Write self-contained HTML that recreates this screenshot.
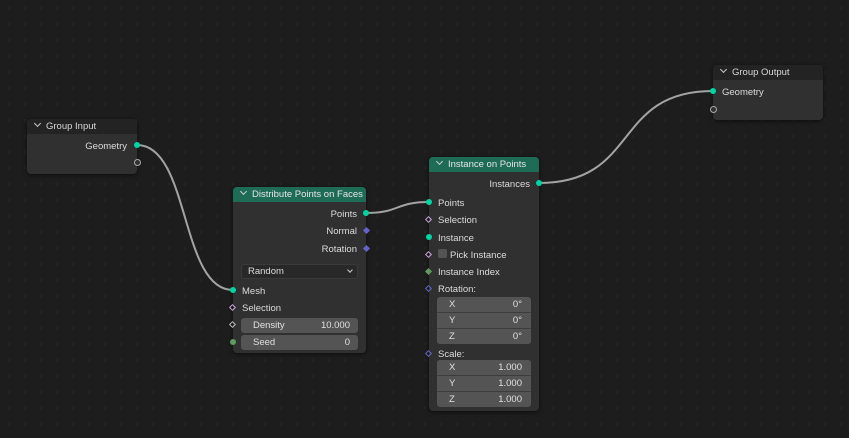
<!DOCTYPE html>
<html><head><meta charset="utf-8"><style>
body{margin:0;width:849px;height:438px;overflow:hidden;background:#1d1d1d;font-family:"Liberation Sans",sans-serif;font-size:9.5px;color:#dcdcdc;position:relative}
.grid{position:absolute;inset:0;background-image:radial-gradient(circle,#252525 1px,transparent 1.3px);background-size:16px 16px;background-position:1px 0px}
.n{position:absolute;background:#303030;border-radius:4px;box-shadow:0 1px 4px rgba(0,0,0,.6)}
.h{height:15px;line-height:16px;border-radius:4px 4px 0 0;background:#232323;padding-left:8px;color:#d8d8d8}
.h.g{background:#1e6b56;color:#e6e6e6}
.h::before{content:"";display:inline-block;width:4px;height:4px;border-right:1px solid #ccc;border-bottom:1px solid #ccc;transform:rotate(45deg);margin:0 6px 3px 0}
.t{position:absolute;white-space:nowrap;line-height:12px;margin-top:2px}
.r{text-align:right}
.s{position:absolute;width:6px;height:6px;border-radius:50%;background:#00d6a3;margin:-3px 0 0 -3px}
.d{position:absolute;width:5px;height:5px;transform:rotate(45deg);margin:-3px 0 0 -3px;box-sizing:border-box}
.f{position:absolute;background:#545454;border-radius:3px;height:15px;line-height:16px;box-sizing:border-box;padding:0 8px 0 12px;display:flex;justify-content:space-between;color:#e0e0e0}
.box{position:absolute;background:#545454;border-radius:3px;overflow:hidden}
.box div{height:15px;line-height:16px;display:flex;justify-content:space-between;padding:0 9px 0 12px;border-bottom:1px solid #3c3c3c;color:#e0e0e0}
</style></head><body>
<div class="grid"></div>
<svg width="849" height="438" style="position:absolute;left:0;top:0">
<g fill="none" stroke="#a3a3a3" stroke-width="2">
<path d="M137 145 C190 145 180 290 233 290"/>
<path d="M366 213 C400 213 395 202 429 202"/>
<path d="M539 183 C640 183 612 91 713 91"/>
</g></svg>

<div class="n" style="left:27px;top:119px;width:110px;height:55px">
<div class="h">Group Input</div>
<div class="t r" style="right:10px;top:20px">Geometry</div>
</div>
<div class="s" style="left:137px;top:145px"></div>
<div class="s" style="left:137px;top:162px;background:#303030;border:1px solid #aaa;width:5px;height:5px"></div>

<div class="n" style="left:713px;top:65px;width:110px;height:55px">
<div class="h">Group Output</div>
<div class="t" style="left:9px;top:20px">Geometry</div>
</div>
<div class="s" style="left:713px;top:91px"></div>
<div class="s" style="left:713px;top:109px;background:#303030;border:1px solid #aaa;width:5px;height:5px"></div>

<div class="n" style="left:233px;top:187px;width:133px;height:166px">
<div class="h g">Distribute Points on Faces</div>
<div class="t r" style="right:9px;top:20px">Points</div>
<div class="t r" style="right:9px;top:37px">Normal</div>
<div class="t r" style="right:9px;top:55px">Rotation</div>
<div style="position:absolute;left:8px;top:77px;width:117px;height:15px;background:#282828;border:1px solid #3a3a3a;border-radius:3px;box-sizing:border-box;line-height:14px;padding-left:6px">Random<span style="position:absolute;right:5px;top:3px;width:3px;height:3px;border-right:1px solid #ccc;border-bottom:1px solid #ccc;transform:rotate(45deg)"></span></div>
<div class="t" style="left:9px;top:97px">Mesh</div>
<div class="t" style="left:9px;top:114px">Selection</div>
<div class="f" style="left:8px;top:131px;width:117px"><span>Density</span><span>10.000</span></div>
<div class="f" style="left:8px;top:148px;width:117px"><span>Seed</span><span>0</span></div>
</div>
<div class="s" style="left:366px;top:213px"></div>
<div class="d" style="left:367px;top:231px;background:#6363c7"></div>
<div class="d" style="left:367px;top:249px;background:#6363c7"></div>
<div class="s" style="left:233px;top:290px"></div>
<div class="d" style="left:233px;top:308px;border:1px solid #c9a3dd"></div>
<div class="d" style="left:233px;top:325px;border:1px solid #bbb"></div>
<div class="s" style="left:233px;top:342px;background:#5d9c5d"></div>

<div class="n" style="left:429px;top:157px;width:110px;height:254px">
<div class="h g">Instance on Points</div>
<div class="t r" style="right:9px;top:20px">Instances</div>
<div class="t" style="left:9px;top:39px">Points</div>
<div class="t" style="left:9px;top:56px">Selection</div>
<div class="t" style="left:9px;top:74px">Instance</div>
<div style="position:absolute;left:9px;top:92px;width:9px;height:9px;background:#545454;border-radius:2px"></div>
<div class="t" style="left:21px;top:91px">Pick Instance</div>
<div class="t" style="left:9px;top:108px">Instance Index</div>
<div class="t" style="left:9px;top:125px">Rotation:</div>
<div class="box" style="left:8px;top:140px;width:94px"><div><span>X</span><span>0°</span></div><div><span>Y</span><span>0°</span></div><div style="border:0"><span>Z</span><span>0°</span></div></div>
<div class="t" style="left:9px;top:190px">Scale:</div>
<div class="box" style="left:8px;top:203px;width:94px"><div><span>X</span><span>1.000</span></div><div><span>Y</span><span>1.000</span></div><div style="border:0"><span>Z</span><span>1.000</span></div></div>
</div>
<div class="s" style="left:539px;top:183px"></div>
<div class="s" style="left:429px;top:202px"></div>
<div class="d" style="left:429px;top:220px;border:1px solid #c9a3dd"></div>
<div class="s" style="left:429px;top:237px"></div>
<div class="d" style="left:429px;top:255px;border:1px solid #c9a3dd"></div>
<div class="d" style="left:429px;top:272px;background:#5d9c5d"></div>
<div class="d" style="left:429px;top:289px;border:1px solid #6363c7"></div>
<div class="d" style="left:429px;top:354px;border:1px solid #6363c7"></div>
</body></html>
